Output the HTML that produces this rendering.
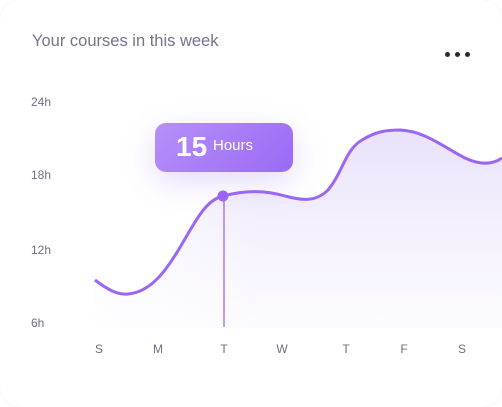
<!DOCTYPE html>
<html><head><style>
html,body{margin:0;padding:0;background:#fff;}
body{width:502px;height:407px;position:relative;overflow:hidden;font-family:"Liberation Sans",sans-serif;}
.card{position:absolute;left:0;top:0;width:502px;height:407px;border-radius:22px;background:#fff;box-shadow:0 0 4px rgba(0,0,0,0.06);}
.title{position:absolute;left:32px;top:32px;font-size:16.5px;color:#74738a;}
.dots{position:absolute;left:445px;top:44px;}
.dots span{display:inline-block;width:5px;height:5px;border-radius:50%;background:#27263a;margin-right:5px;}
.y{position:absolute;left:31px;font-size:12px;color:#6f6e85;}
.x{position:absolute;top:342px;font-size:12px;color:#6f6e85;width:20px;text-align:center;}
.tip{position:absolute;left:155px;top:123px;width:138px;height:49px;border-radius:11px;background:linear-gradient(135deg,#b790f9,#9b69f5);box-shadow:0 10px 30px rgba(150,110,240,0.25);color:#fff;}
.tip b{position:absolute;left:21px;top:8px;font-size:28px;font-weight:bold;}
.tip i{position:absolute;left:58px;top:14px;font-size:15px;font-style:normal;}
</style></head><body>
<div class="card"></div>
<div class="title">Your courses in this week</div>
<div class="dots"><span></span><span></span><span></span></div>
<div class="y" style="top:95px">24h</div>
<div class="y" style="top:168px">18h</div>
<div class="y" style="top:243px">12h</div>
<div class="y" style="top:316px">6h</div>
<svg style="position:absolute;left:0;top:0" width="502" height="407">
<defs>
<linearGradient id="g" x1="0" y1="0" x2="0" y2="1"><stop offset="0" stop-color="#e6defa" stop-opacity="0.9"/><stop offset="1" stop-color="#f4f0fd" stop-opacity="0.3"/></linearGradient>
<linearGradient id="h" x1="0" y1="0" x2="1" y2="0"><stop offset="0" stop-color="#fff" stop-opacity="0.3"/><stop offset="0.4" stop-color="#fff" stop-opacity="1"/></linearGradient>
<mask id="m"><rect x="95" y="0" width="407" height="407" fill="url(#h)"/></mask>
</defs>
<path mask="url(#m)" d="M95,280 C108,290 118,295 128,294 C152,292 168,268 182,244 C196,220 206,200 223,196 C245,190 265,190 285,196 C300,200 315,203 328,190 C343,172 345,150 362,140 C375,132 385,130 400,130 C425,131 445,148 465,158 C480,165 492,165 502,158 L502,328 L95,328 Z" fill="url(#g)"/>
<line x1="224" y1="196" x2="224" y2="327" stroke="#a57cf6" stroke-width="1.5"/>
<path d="M95,280 C108,290 118,295 128,294 C152,292 168,268 182,244 C196,220 206,200 223,196 C245,190 265,190 285,196 C300,200 315,203 328,190 C343,172 345,150 362,140 C375,132 385,130 400,130 C425,131 445,148 465,158 C480,165 492,165 502,158" fill="none" stroke="#9c66f4" stroke-width="3"/>
<circle cx="223" cy="196" r="5.5" fill="#9c66f4"/>
</svg>
<div class="tip"><b>15</b><i>Hours</i></div>
<div class="x" style="left:89px">S</div>
<div class="x" style="left:148px">M</div>
<div class="x" style="left:214px">T</div>
<div class="x" style="left:272px">W</div>
<div class="x" style="left:336px">T</div>
<div class="x" style="left:394px">F</div>
<div class="x" style="left:452px">S</div>
</body></html>
